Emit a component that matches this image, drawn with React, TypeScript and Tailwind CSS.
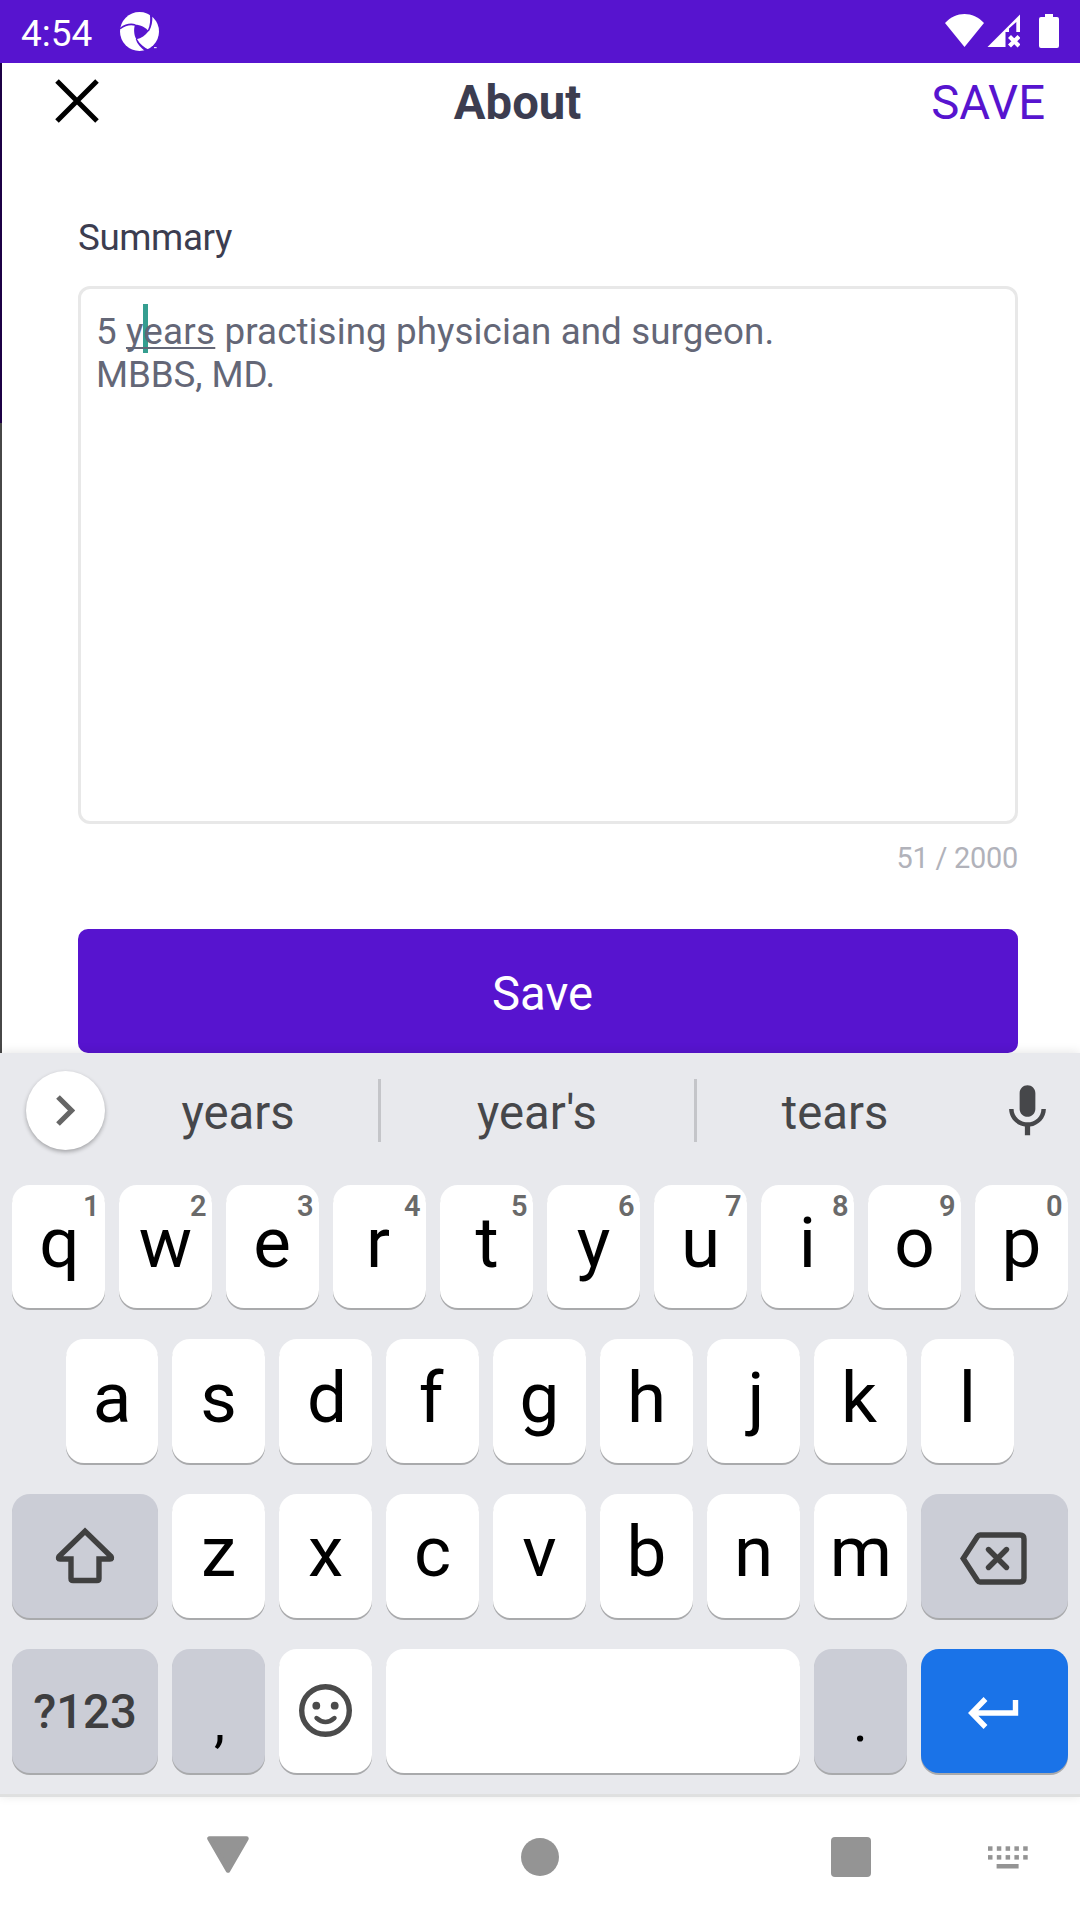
import React from "react";

type KeyProps = {
  label?: string;
  hint?: string;
  size?: string;
  tone?: string;
  labelTop?: string;
  children?: React.ReactNode;
};

const NUDGE: Record<string, string> = {
  q: "pl-[2px]",
  d: "pl-[3px]",
  j: "pl-[5px]",
  r: "pr-[3px]",
  e: "pr-[1px]",
  f: "pr-[3px]",
  k: "pr-[3px]",
  m: "pl-[1px]",
  t: "pl-[1px]",
};

function Key({
  label,
  hint,
  size = "h-[124px] w-[93px]",
  tone = "bg-white",
  labelTop = "mt-[16px]",
  children,
}: KeyProps) {
  return (
    <div
      className={`relative flex shrink-0 items-start justify-center rounded-[18px] shadow-[0_2px_0_#a9aaac] ${size} ${tone}`}
    >
      {label && (
        <span className={`text-[71px] leading-[84px] text-black ${labelTop} ${NUDGE[label] ?? ""}`}>{label}</span>
      )}
      {children}
      {hint && (
        <span className="absolute right-[5.5px] top-[4px] text-[29px] font-semibold leading-[34px] text-[#6a6a6a]">
          {hint}
        </span>
      )}
    </div>
  );
}

function StatusBar() {
  return (
    <div className="flex h-[63px] items-start bg-[#5714cf] pl-[21px] text-white">
      <span className="mt-[11px] w-[99px] text-[37px] leading-[45px]">4:54</span>
      <svg className="mt-[12px] h-[39px] w-[39px]" viewBox="0 0 117 117">
        <circle cx="58.5" cy="58.5" r="58.5" fill="#fff" />
        <path d="M45 38 C62 38 76 46 86 57 C76 70 64 79 49 82 C41 68 41 50 45 38Z" fill="#5714cf" />
        <path d="M0 50 C16 38 32 35 46 39" fill="none" stroke="#5714cf" strokeWidth="5" />
        <path d="M89 3 C92 22 91 40 83 56 L87 58 C95 44 98 30 97 10Z" fill="#5714cf" />
        <path d="M47 81 C52 97 64 109 76 118 L88 114 C72 107 60 97 51 81Z" fill="#5714cf" />
        <path d="M102 107h8" stroke="#fff" strokeWidth="3" />
      </svg>
      <div className="flex-1" />
      <svg className="mt-[14px] h-[33px] w-[39px]" viewBox="0 0 39 33">
        <path d="M19.5 33 L0 9 C11-3 28-3 39 9Z" fill="#fff" />
      </svg>
      <svg className="ml-[3px] mt-[14px] h-[34px] w-[33px]" viewBox="0 0 33 34">
        <path d="M0.5 33 L33 0.5 V18 H29.3 V8 L22 14.5 V18 H18.5 V33Z" fill="#fff" />
        <path d="M22.500 22.500 L32 32 M32 22.500 L22.500 32" stroke="#fff" strokeWidth="4.200" />
      </svg>
      <svg className="ml-[19px] mr-[21px] mt-[14px] h-[34px] w-[20px]" viewBox="0 0 20 34">
        <path d="M6 0H14V3H18Q20 3 20 5V32Q20 34 18 34H2Q0 34 0 32V5Q0 3 2 3H6Z" fill="#fff" />
      </svg>
    </div>
  );
}

function Form() {
  return (
    <div className="flex h-[990px] bg-white">
      <div className="flex w-[2px] flex-col">
        <div className="h-[360px] bg-[#1c0045]" />
        <div className="flex-1 bg-[#474747]" />
      </div>
      <div className="flex flex-1 flex-col">
        <header className="flex h-[77px] items-center justify-between pl-[53px] pr-[35px]">
          <svg className="mb-[2px] h-[44px] w-[44px]" viewBox="0 0 44 44">
            <path d="M2 2L42 42M42 2L2 42" stroke="#000" strokeWidth="5" />
          </svg>
          <h1 className="ml-[5px] pt-[2px] text-[47.25px] font-bold leading-[56px] text-[#3c3d50]">About</h1>
          <button className="pt-[2px] text-[47.25px] leading-[56px] text-[#5714cf]">SAVE</button>
        </header>
        <div className="flex flex-col pl-[76px] pr-[62px]">
          <label className="mt-[76px] text-[36.75px] leading-[44px] tracking-[-0.4px] text-[#3c3d50]">Summary</label>
          <div className="mt-[26px] h-[538px] rounded-[12px] border-[3px] border-[#e8e8e8] pl-[15px] pt-[21px] text-[36.75px] leading-[43px] text-[#646777]">
            <p className="tracking-[0.09px]">
              5{" "}
              <span className="relative underline decoration-[2px] underline-offset-[3px] [text-decoration-skip-ink:none]">
                <span className="absolute left-[17.5px] top-[-6px] h-[49px] w-[5px] bg-[#359e90]" />
                <span className="relative tracking-[0.25px]">years</span>
              </span>{" "}
              practising physician and surgeon.
            </p>
            <p className="tracking-[-0.1px]">MBBS, MD.</p>
          </div>
          <div className="mt-[17px] text-right text-[28.9px] leading-[34px] tracking-[-0.25px] text-[#b1b2ba]">
            51 / 2000
          </div>
          <button className="mt-[54px] flex h-[124px] items-center justify-center rounded-[10px] bg-[#5714cf] pr-[11px] pt-[6px] text-[47.25px] leading-[56px] text-white">
            Save
          </button>
        </div>
      </div>
    </div>
  );
}

function Suggestions() {
  return (
    <div className="flex h-[132px] items-start text-[47.25px] leading-[56px] text-[#46474a]">
      <div className="ml-[26px] mt-[18px] flex h-[79px] w-[79px] items-center justify-center rounded-full bg-white pr-px shadow-[0_2px_4px_rgba(0,0,0,0.3)]">
        <svg className="h-[31px] w-[19px]" viewBox="0 0 19 31">
          <path d="M2 2L15.5 15.5L2 29" fill="none" stroke="#666" strokeWidth="5.2" />
        </svg>
      </div>
      <span className="mt-[32px] w-[273px] pr-[7px] text-center">years</span>
      <div className="mt-[26px] h-[63px] w-[3px] bg-[#c4c5c9]" />
      <span className="mt-[32px] w-[313px] pr-px text-center">year's</span>
      <div className="mt-[26px] h-[63px] w-[3px] bg-[#c4c5c9]" />
      <span className="mt-[32px] w-[299px] pr-[23px] text-center">tears</span>
      <svg className="mt-[27px] h-[63px] w-[63px]" viewBox="0 0 24 24" fill="#46474a">
        <path d="M12 14c1.66 0 2.99-1.34 2.99-3L15 5c0-1.66-1.34-3-3-3S9 3.34 9 5v6c0 1.66 1.34 3 3 3zm5.3-3c0 3-2.54 5.1-5.3 5.1S6.7 14 6.7 11H5c0 3.41 2.72 6.23 6 6.72V21h2v-3.28c3.28-.48 6-3.3 6-6.72h-1.7z" />
      </svg>
    </div>
  );
}

function Keyboard() {
  return (
    <div className="relative flex h-[744px] flex-col border-b-[3px] border-[#dfe0e0] bg-[#e8e9ed] shadow-[0_-1px_10px_rgba(0,0,0,0.1)]">
      <Suggestions />
      <div className="flex h-[154px] gap-[14px] pl-[12px]">
        {"qwertyuiop".split("").map((c, i) => (
          <Key key={c} label={c} hint={String((i + 1) % 10)} size="h-[123px] w-[93px]" />
        ))}
      </div>
      <div className="flex h-[155px] gap-[14px] pl-[66px]">
        {"asdfghjkl".split("").map((c, i) => (
          <Key
            key={c}
            label={c}
            labelTop="mt-[17px]"
            size={i === 0 ? "h-[124px] w-[92px]" : "h-[124px] w-[93px]"}
          />
        ))}
      </div>
      <div className="flex h-[155px] gap-[14px] pl-[12px]">
        <Key size="h-[124px] w-[146px]" tone="bg-[#cbcdd6]">
          <svg className="mt-[33px] h-[57px] w-[60px]" viewBox="0 0 60 57">
            <path
              d="M30 4.2L56 29.5Q57.5 32 55 32H44V51.5Q44 53.5 42 53.5H18Q16 53.5 16 51.5V32H5Q2.500 32 4 29.500Z"
              fill="none"
              stroke="#404040"
              strokeWidth="5.400"
            />
          </svg>
        </Key>
        {"zxcvbnm".split("").map((c) => (
          <Key key={c} label={c} />
        ))}
        <Key size="h-[124px] w-[147px]" tone="bg-[#cbcdd6]">
          <svg className="mr-[2px] mt-[38px] h-[53px] w-[67px]" viewBox="0 0 67 53">
            <path
              d="M20 3H60Q64 3 64 7V46Q64 50 60 50H20Q18.500 50 17.500 48.500L3.200 26.500L17.500 4.500Q18.500 3 20 3Z"
              fill="none"
              stroke="#404040"
              strokeWidth="5.400"
            />
            <path
              d="M28.500 17.500L46.500 35.500M46.500 17.500L28.500 35.500"
              stroke="#404040"
              strokeWidth="5.400"
              strokeLinecap="round"
            />
          </svg>
        </Key>
      </div>
      <div className="flex gap-[14px] pl-[12px]">
        <Key size="h-[124px] w-[146px]" tone="bg-[#cbcdd6]">
          <span className="mt-[35px] text-[47.25px] font-medium leading-[56px] text-[#3e3e40]">?123</span>
        </Key>
        <Key tone="bg-[#cbcdd6]">
          <span className="mt-[31px] pl-[2px] text-[56px] leading-[84px] text-black">,</span>
        </Key>
        <Key>
          <svg className="mt-[35px] h-[53px] w-[53px]" viewBox="0 0 53 53">
            <circle cx="26.500" cy="26.500" r="23.800" fill="none" stroke="#4b4b4b" strokeWidth="5.400" />
            <circle cx="17.300" cy="21.700" r="3.900" fill="#4b4b4b" />
            <circle cx="35.700" cy="21.700" r="3.900" fill="#4b4b4b" />
            <path
              d="M17.500 34Q26.500 42 35.500 34"
              fill="none"
              stroke="#4b4b4b"
              strokeWidth="4.400"
              strokeLinecap="round"
            />
          </svg>
        </Key>
        <Key size="h-[124px] w-[414px]" />
        <Key tone="bg-[#cbcdd6]">
          <span className="mt-[31px] text-[56px] leading-[84px] text-black">.</span>
        </Key>
        <Key size="h-[124px] w-[147px]" tone="bg-[#1a73e8]">
          <svg className="mr-[2px] mt-[48px] h-[32px] w-[51px]" viewBox="0 0 51 32">
            <path d="M47.500 3V16H5M17.500 2L3.800 16L17.500 30" fill="none" stroke="#fff" strokeWidth="5.400" />
          </svg>
        </Key>
      </div>
    </div>
  );
}

function NavBar() {
  return (
    <div className="flex h-[123px] items-start bg-white">
      <svg className="ml-[207px] mt-[39px] h-[37px] w-[42px]" viewBox="0 0 42 37">
        <path
          d="M2.500 2.500H39.500L21 34.500Z"
          fill="#949494"
          stroke="#949494"
          strokeWidth="4.500"
          strokeLinejoin="round"
        />
      </svg>
      <div className="ml-[272px] mt-[41px] h-[38px] w-[38px] rounded-full bg-[#949494]" />
      <div className="ml-[272px] mt-[40px] h-[40px] w-[40px] rounded-[4px] bg-[#949494]" />
      <svg className="ml-[117px] mt-[49px] h-[23px] w-[40px]" viewBox="0 0 40 23" fill="#949494">
        {[0, 1, 2, 3, 4].map((i) => (
          <g key={i}>
            <rect x={i * 8.8} y="0.300" width="4.500" height="4.500" />
            <rect x={i * 8.8} y="9.100" width="4.500" height="4.500" />
          </g>
        ))}
        <rect x="8.600" y="18" width="22" height="4.500" />
      </svg>
    </div>
  );
}

export default function App() {
  return (
    <div className="h-[1920px] w-[1080px] overflow-hidden bg-white [font-family:Roboto,sans-serif]">
      <StatusBar />
      <Form />
      <Keyboard />
      <NavBar />
    </div>
  );
}
